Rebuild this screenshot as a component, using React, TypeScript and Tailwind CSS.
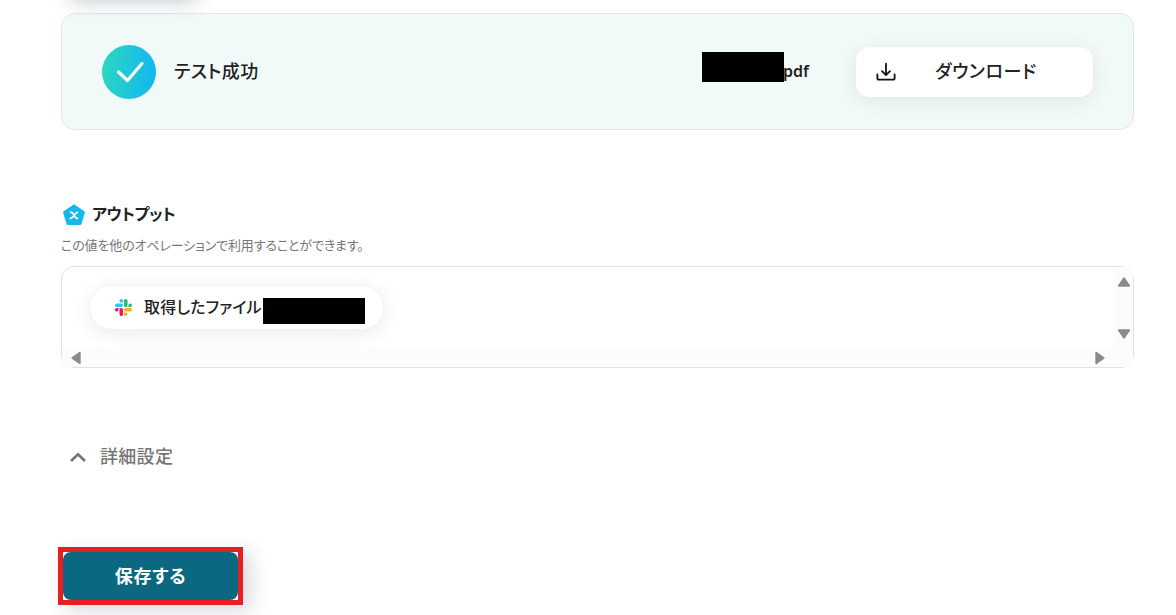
import type { ReactNode } from 'react'

function SuccessIcon() {
  return (
    <svg width="54" height="54" viewBox="0 0 54 54" fill="none" className="shrink-0">
      <defs>
        <linearGradient id="success" x1="0" y1="0" x2="1" y2="0.1">
          <stop offset="0" stopColor="#2dd8be" />
          <stop offset="1" stopColor="#12b9ee" />
        </linearGradient>
      </defs>
      <circle cx="27" cy="27" r="27" fill="url(#success)" />
      <path d="M16.5 27 25.5 35.5 40 18.5" stroke="white" strokeWidth="3.2" strokeLinecap="round" strokeLinejoin="round" />
    </svg>
  )
}

function DownloadIcon() {
  return (
    <svg width="20" height="20" viewBox="0 0 20 20" fill="none" stroke="#111" strokeWidth="1.8" strokeLinecap="round" strokeLinejoin="round">
      <path d="M10 1.7V13M6 9.2l4 4 4-4" />
      <path d="M1.4 12.3v4.2a1.2 1.2 0 0 0 1.2 1.2h14.8a1.2 1.2 0 0 0 1.2-1.2v-4.2" />
    </svg>
  )
}

function OutputIcon() {
  return (
    <svg width="24" height="24" viewBox="0 0 24 24" fill="none" className="mt-0.5">
      <path d="M12 2.7 21.6 9.4 18.2 20.6H5.8L2.4 9.4Z" fill="#14b9ec" stroke="#14b9ec" strokeWidth="2.6" strokeLinejoin="round" />
      <path d="M8.6 9.4c2-.4 2.6.6 3.4 2.6s1.5 3.8 3.7 3.4M15.5 9.4c-2.2 0-4.6 6-7.2 6" stroke="white" strokeWidth="1.7" strokeLinecap="round" />
    </svg>
  )
}

function SlackIcon() {
  return (
    <svg width="17" height="17" viewBox="0 0 122.8 122.8">
      <path d="M25.8 77.6c0 7.1-5.8 12.9-12.9 12.9S0 84.7 0 77.6s5.8-12.9 12.9-12.9h12.9zm6.5 0c0-7.1 5.8-12.9 12.9-12.9s12.9 5.8 12.9 12.9v32.3c0 7.1-5.8 12.9-12.9 12.9s-12.9-5.8-12.9-12.9z" fill="#e01e5a" />
      <path d="M45.2 25.8c-7.1 0-12.9-5.8-12.9-12.9S38.1 0 45.2 0s12.9 5.8 12.9 12.9v12.9zm0 6.5c7.1 0 12.9 5.8 12.9 12.9s-5.8 12.9-12.9 12.9H12.9C5.8 58.1 0 52.3 0 45.2s5.8-12.9 12.9-12.9z" fill="#36c5f0" />
      <path d="M97 45.2c0-7.1 5.8-12.9 12.9-12.9s12.9 5.8 12.9 12.9-5.8 12.9-12.9 12.9H97zm-6.5 0c0 7.1-5.8 12.9-12.9 12.9s-12.9-5.8-12.9-12.9V12.9C64.7 5.8 70.5 0 77.6 0s12.9 5.8 12.9 12.9z" fill="#2eb67d" />
      <path d="M77.6 97c7.1 0 12.9 5.8 12.9 12.9s-5.8 12.9-12.9 12.9-12.9-5.8-12.9-12.9V97zm0-6.5c-7.1 0-12.9-5.8-12.9-12.9s5.8-12.9 12.9-12.9h32.3c7.1 0 12.9 5.8 12.9 12.9s-5.8 12.9-12.9 12.9z" fill="#ecb22e" />
    </svg>
  )
}

function ScrollArrow({ className }: { className?: string }) {
  return (
    <svg width="14" height="10" viewBox="0 0 14 10" className={className}>
      <path d="M7 1.3 12.2 8.8H1.8Z" fill="#8b8b8b" stroke="#8b8b8b" strokeWidth="1.8" strokeLinejoin="round" />
    </svg>
  )
}

function Chip({ children }: { children: ReactNode }) {
  return (
    <div className="ml-[27px] mt-[18px] flex h-[45px] w-[295px] items-center rounded-full border border-[#f2f2f2] bg-white pl-[25px] shadow-[0_4px_20px_rgba(0,0,0,0.08)]">
      {children}
    </div>
  )
}

export default function App() {
  return (
    <div className="relative h-[615px] w-[1176px] overflow-hidden bg-white pl-[61px] pt-[13px] font-['Noto_Sans','Noto_Sans_CJK_JP',sans-serif] font-medium text-[#222] [font-feature-settings:'palt']">
      {/* テスト結果 */}
      <section className="relative flex h-[117px] w-[1073px] items-center rounded-[14px] border border-[#e2e6e6] bg-[#f2faf9] pl-10 pr-10">
        <SuccessIcon />
        <span className="-mt-0.5 ml-[18px] text-[18px] leading-6 tracking-[0.45px]">テスト成功</span>
        <div className="ml-auto flex items-center">
          <div className="-mt-[9px] h-[30px] w-[82px] bg-black" />
          <span className="-ml-px -mt-0.5 text-[16px] font-semibold leading-6">pdf</span>
        </div>
        <button className="ml-[47px] flex h-[50px] w-[237px] items-center rounded-[14px] bg-white pl-[20px] shadow-[0_4px_20px_rgba(0,0,0,0.08)]">
          <DownloadIcon />
          <span className="-mt-0.5 ml-[39px] text-[18px] leading-6 tracking-[0.6px]">ダウンロード</span>
        </button>
      </section>

      {/* 上のボタンの影 */}
      <div className="absolute -top-[52px] left-[70px] h-12 w-[128px] rounded-lg shadow-[0_4px_20px_rgba(12,35,50,0.28)]" />

      {/* アウトプット */}
      <section className="mt-[72px] w-[1073px]">
        <div className="flex h-6 items-center gap-[6px] pl-px">
          <OutputIcon />
          <h2 className="text-[16px] font-bold leading-6 tracking-[-0.3px]">アウトプット</h2>
        </div>
        <p className="mt-[9px] text-[13px] font-normal leading-5 tracking-[-0.13px] text-[#777]">この値を他のオペレーションで利用することができます。</p>
        <div className="relative mt-[11px] flex h-[102px] flex-col rounded-[13px] border border-[#e2e2e2]">
          <div className="flex flex-1">
            <div className="flex-1 overflow-hidden rounded-tl-[12px]">
              <Chip>
                <SlackIcon />
                <span className="-mt-0.5 ml-[12px] whitespace-nowrap text-[16px] leading-6 tracking-[0.2px]">取得したファイル</span>
                <div className="ml-px mt-[7px] h-[26px] w-[102px] shrink-0 bg-black" />
              </Chip>
            </div>
            <div className="relative z-10 flex w-[19px] flex-col items-center justify-between bg-[#fcfcfc] pb-[9px] pt-[10px]">
              <ScrollArrow />
              <ScrollArrow className="rotate-180" />
            </div>
          </div>
          <div className="relative z-10 flex h-[19px] items-center justify-between bg-[#fcfcfc] pl-[7px] pr-[26px]">
            <ScrollArrow className="-rotate-90" />
            <ScrollArrow className="rotate-90" />
          </div>
          {/* スクロールバーが角の枠線を覆う */}
          <div className="absolute -right-px -top-px size-[9px] bg-[#fdfdfd]" />
          <div className="absolute -bottom-px -right-px size-[9px] bg-[#fdfdfd]" />
          <div className="absolute -bottom-px -left-px size-[9px] bg-[#fdfdfd]" />
        </div>
      </section>

      {/* 詳細設定 */}
      <div className="mt-[76px] flex h-6 items-center pl-[9px] text-[#757575]">
        <svg width="16" height="12" viewBox="0 0 16 12" fill="none" stroke="currentColor" strokeWidth="2.6" className="mt-px">
          <path d="M1 10 8 3.2 15 10" />
        </svg>
        <span className="ml-[14px] text-[18px] leading-6 tracking-[0.3px]">詳細設定</span>
      </div>

      <div className="-ml-[3px] mt-[79px] h-[58px] w-[185px] border-[5px] border-[#e62020] shadow-[8px_6px_18px_rgba(12,35,50,0.16)]">
        <button className="h-full w-full rounded-lg bg-[#0b6880] text-[18px] font-bold leading-6 tracking-[0.7px] text-white">保存する</button>
      </div>
    </div>
  )
}
